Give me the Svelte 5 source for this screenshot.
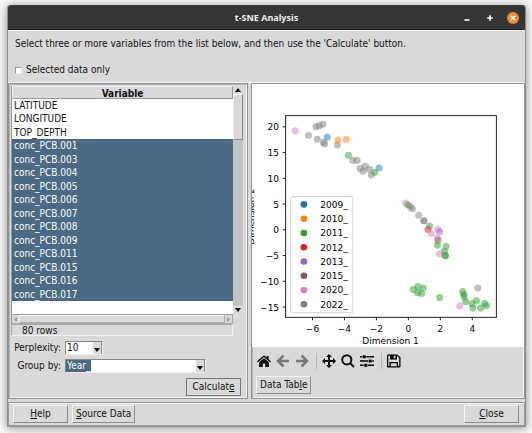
<script lang="ts">
	interface Point {
		x: number;
		y: number;
		year: string;
	}

	const years: Record<string, string> = {
		'2009_': '#1f77b4',
		'2010_': '#ff7f0e',
		'2011_': '#2ca02c',
		'2012_': '#d62728',
		'2013_': '#9467bd',
		'2015_': '#8c564b',
		'2020_': '#e377c2',
		'2022_': '#7f7f7f'
	};

	const plainVariables = ['LATITUDE', 'LONGITUDE', 'TOP_DEPTH'];
	const pcbs = ['001', '003', '004', '005', '006', '007', '008', '009', '011', '015', '016', '017'];
	const variables = [...plainVariables, ...pcbs.map((n) => `conc_PCB.${n}`)];

	let selected = $state(pcbs.map((n) => `conc_PCB.${n}`));
	let selectedOnly = $state(false);
	let perplexity = $state('10');
	let groupBy = $state('Year_');

	// canvas positions, in drawing order
	const raw: [string, number, number][] = [
		['2020_', 296, 131.7],
		['2022_', 309.3, 136],
		['2022_', 316.7, 127.7],
		['2022_', 320, 126.5],
		['2022_', 323.7, 125],
		['2022_', 318, 140],
		['2022_', 324, 143],
		['2022_', 325.3, 144.7],
		['2009_', 328, 138],
		['2022_', 338, 145.7],
		['2010_', 338.7, 140.7],
		['2010_', 347, 140],
		['2011_', 349, 156],
		['2022_', 353.3, 161],
		['2022_', 357.7, 161.3],
		['2022_', 360.7, 169.3],
		['2022_', 363.7, 172],
		['2022_', 365.7, 167],
		['2022_', 370, 170],
		['2022_', 372, 175.7],
		['2011_', 375.3, 173],
		['2009_', 379.7, 168.7],
		['2020_', 406, 203.7],
		['2011_', 408.3, 205.3],
		['2022_', 410.7, 207.3],
		['2022_', 412.7, 209.3],
		['2022_', 419, 215.7],
		['2022_', 424.3, 221.3],
		['2022_', 424.3, 221.3],
		['2011_', 430, 226.7],
		['2012_', 428.3, 230],
		['2020_', 431.7, 234],
		['2020_', 438, 229.7],
		['2013_', 440, 232.3],
		['2020_', 437.7, 238.3],
		['2015_', 438.3, 240.7],
		['2011_', 437.7, 245.7],
		['2011_', 446.3, 246.7],
		['2011_', 444.7, 251.7],
		['2020_', 440, 254.3],
		['2011_', 445.7, 256],
		['2011_', 445.7, 256.3],
		['2011_', 413.7, 289.7],
		['2011_', 418.3, 286.7],
		['2011_', 423.7, 288.3],
		['2011_', 418, 293],
		['2011_', 422, 293.7],
		['2011_', 440, 297.7],
		['2011_', 463, 291.7],
		['2011_', 464, 294.7],
		['2011_', 464.3, 297.3],
		['2011_', 466, 302],
		['2011_', 472.3, 304],
		['2011_', 473, 308.3],
		['2011_', 476.7, 301],
		['2011_', 480.7, 308.3],
		['2011_', 484.7, 303.7],
		['2011_', 486.7, 306],
		['2020_', 460, 306.3],
		['2022_', 478, 288.3]
	];
	const points: Point[] = raw.map(([year, x, y]) => ({ year, x, y }));

	const xTicks = [-6, -4, -2, 0, 2, 4];
	const yTicks = [20, 15, 10, 5, 0, -5, -10, -15];
	const px = (v: number) => 408.8 + v * 15.92;
	const py = (v: number) => 230.3 - v * 5.13;
	const label = (v: number) => String(v).replace('-', '−');

	function toggle(name: string) {
		selected = selected.includes(name)
			? selected.filter((n) => n !== name)
			: [...selected, name];
	}
</script>

<div class="window">
	<header class="titlebar">
		<h1>t-SNE Analysis</h1>
		<div class="controls">
			<button aria-label="Minimize">
				<svg width="12" height="12" viewBox="0 0 12 12"><path d="M3.5 8h5" /></svg>
			</button>
			<button aria-label="Maximize">
				<svg width="12" height="12" viewBox="0 0 12 12"><path d="M6 3.2v5.6M3.2 6h5.6" /></svg>
			</button>
			<button aria-label="Close window">
				<svg width="12" height="12" viewBox="0 0 12 12">
					<circle cx="6" cy="6" r="6" fill="#f08a2c" />
					<path d="M3.8 3.8l4.4 4.4M8.2 3.8L3.8 8.2" />
				</svg>
			</button>
		</div>
	</header>

	<section class="intro">
		<p>Select three or more variables from the list below, and then use the 'Calculate' button.</p>
		<label class="check">
			<input type="checkbox" bind:checked={selectedOnly} />
			Selected data only
		</label>
	</section>

	<main>
		<section class="panel left">
			<div class="list">
				<div class="rows">
					<table>
						<thead>
							<tr><th>Variable</th></tr>
						</thead>
						<tbody>
							{#each variables as name}
								<tr class:selected={selected.includes(name)} onclick={() => toggle(name)}>
									<td>{name}</td>
								</tr>
							{/each}
						</tbody>
					</table>
				</div>
				<div class="vbar">
					<svg class="cap" width="10" height="8" viewBox="0 0 10 8"><path d="M2 6l3-4 3 4z" /></svg>
					<div class="vthumb"></div>
					<div class="space"></div>
					<svg class="cap" width="10" height="8" viewBox="0 0 10 8"><path d="M2 2l3 4 3-4z" /></svg>
				</div>
				<div class="hbar">
					<svg width="7" height="7" viewBox="0 0 7 7"><path d="M5 1L2 3.5 5 6z" /></svg>
					<div class="hthumb"></div>
					<svg width="7" height="7" viewBox="0 0 7 7"><path d="M2 1l3 2.500L2 6z" /></svg>
				</div>
				<div class="status">80 rows</div>
			</div>

			<div class="form">
				<label for="perplexity">Perplexity:</label>
				<div class="combo short">
					<select id="perplexity" bind:value={perplexity}>
						<option>10</option>
						<option>20</option>
						<option>30</option>
					</select>
					<svg width="8" height="12" viewBox="0 0 8 12"><path d="M1 6h6L4 10z" /></svg>
				</div>
				<label for="group">Group by:</label>
				<div class="combo marked">
					<select id="group" bind:value={groupBy}>
						<option>Year_</option>
					</select>
					<svg width="8" height="12" viewBox="0 0 8 12"><path d="M1 6h6L4 10z" /></svg>
				</div>
			</div>

			<div class="actions">
				<button class="btn default">Calculat<u>e</u></button>
			</div>
		</section>

		<section class="panel right">
			<svg class="plot" viewBox="253 85 271 262" role="img" aria-label="t-SNE scatter plot">
				{#each points as p}
					<circle cx={p.x} cy={p.y} r="3" fill={years[p.year]} stroke={years[p.year]} opacity="0.5" />
				{/each}

				<rect class="axes" x="286.5" y="116.5" width="210" height="201" />
				{#each xTicks as v}
					<path class="axes" d="M{px(v)} 317.500v3" />
					<text x={px(v)} y="332" text-anchor="middle">{label(v)}</text>
				{/each}
				{#each yTicks as v}
					<path class="axes" d="M286.500 {py(v)}h-3" />
					<text x="280" y={py(v) + 3.5} text-anchor="end">{label(v)}</text>
				{/each}
				<text x="391" y="344" text-anchor="middle">Dimension 1</text>
				<text transform="translate(255 217) rotate(-90)" text-anchor="middle">Dimension 2</text>

				<rect class="legend" x="291.5" y="197" width="62" height="116" rx="2" />
				{#each Object.entries(years) as [year, color], i}
					<circle cx="304.700" cy={205 + i * 14.2} r="3.300" fill={color} />
					<text x="321" y={208.3 + i * 14.2}>{year}</text>
				{/each}
			</svg>

			<div class="toolbar">
				<button aria-label="Home">
					<svg width="14" height="14" viewBox="0 0 14 14">
						<path d="M0 7.300L7 1.300l2.600 2.200V2h2v3.200L14 7.300l-.8 1L7 3.100.8 8.300z" />
						<path d="M2 8.300L7 4.200l5 4.100V13H8.300V9.500H5.700V13H2z" />
					</svg>
				</button>
				<button class="off" aria-label="Back">
					<svg width="14" height="14" viewBox="0 0 14 14">
						<path class="stroke" d="M13 7H2.500M7.500 1.500L2 7l5.500 5.500" />
					</svg>
				</button>
				<button class="off" aria-label="Forward">
					<svg width="14" height="14" viewBox="0 0 14 14">
						<path class="stroke" d="M1 7h10.500M6.500 1.500L12 7l-5.500 5.500" />
					</svg>
				</button>
				<span class="sep"></span>
				<button aria-label="Pan">
					<svg width="14" height="14" viewBox="0 0 14 14">
						<path
							d="M7 0l3 3H8v3h3V4l3 3-3 3V8H8v3h2l-3 3-3-3h2V8H3v2L0 7l3-3v2h3V3H4z"
						/>
					</svg>
				</button>
				<button aria-label="Zoom">
					<svg width="14" height="14" viewBox="0 0 14 14">
						<circle class="stroke" cx="5.800" cy="5.800" r="4.600" />
						<path class="stroke" d="M9.200 9.200L13 13" />
					</svg>
				</button>
				<button aria-label="Configure subplots">
					<svg width="14" height="14" viewBox="0 0 14 14">
						<path d="M0 2h14v1.500H0zM0 6.300h14v1.500H0zM0 10.600h14v1.500H0z" />
						<path class="knob" d="M2.500 1h3.500v3.500H2.500zM8.500 5.300H12v3.500H8.500zM4 9.600h3.500v3.500H4z" />
					</svg>
				</button>
				<span class="sep"></span>
				<button aria-label="Save">
					<svg width="14" height="14" viewBox="0 0 14 14">
						<path
							fill-rule="evenodd"
							d="M1 .5h9.500L13.500 3.500V12.500a1 1 0 0 1-1 1H1a1 1 0 0 1-1-1V1.500a1 1 0 0 1 1-1zM1.300 1.800v10.400h1.200V8h8.500v4.200h1.200V4L10 1.800v3.700H3V1.800zM6.700 1.800v2.500h1.800V1.800zM3.800 9.300v2.900h5.900V9.300z"
						/>
					</svg>
				</button>
			</div>
			<div class="table-row">
				<button class="btn">Data Tab<u>l</u>e</button>
			</div>
		</section>
	</main>

	<footer>
		<button class="btn"><u>H</u>elp</button>
		<button class="btn source"><u>S</u>ource Data</button>
		<button class="btn close"><u>C</u>lose</button>
	</footer>
</div>

<style>
	:global(body) {
		background: #f7f7f7;
	}

	.window {
		margin: 5px 6px 6px 7px;
		background: #d9d9d9;
		border: 1px solid #8c8c8c;
		border-top: 0;
		border-radius: 3px 3px 0 0;
		box-shadow: 0 1px 8px rgba(0, 0, 0, 0.45);
		font-family: 'DejaVu Sans Condensed', 'DejaVu Sans', sans-serif;
		font-size: 10px;
		line-height: 14px;
		color: #111;
	}

	button,
	select,
	input {
		margin: 0;
		font: inherit;
		color: inherit;
	}

	svg {
		display: block;
		flex: none;
	}

	.titlebar {
		display: grid;
		grid-template-columns: 1fr auto 1fr;
		align-items: center;
		height: 25px;
		padding: 0 6px;
		background: #363636;
		border-radius: 3px 3px 0 0;
		box-shadow: inset 0 -1px #222;
		color: #f2f2f2;
	}

	h1 {
		grid-column: 2;
		margin: 0;
		font: bold 9px/14px 'Noto Sans', sans-serif;
	}

	.controls {
		display: flex;
		justify-content: flex-end;
		gap: 11px;
	}

	.controls button {
		padding: 0;
		border: 0;
		background: none;
	}

	.controls path {
		fill: none;
		stroke: #fff;
		stroke-width: 1.6;
	}

	.intro {
		padding: 6px 7px 5px;
		border-top: 1px solid #eee;
	}

	.intro p {
		margin: 0 0 12px;
	}

	.check {
		display: flex;
		align-items: center;
		gap: 4px;
	}

	.check input {
		appearance: none;
		width: 7px;
		height: 7px;
		box-sizing: border-box;
		background: #fff;
		border: 1px solid;
		border-color: #999 #eee #eee #999;
	}

	.check input:checked {
		background: #4a6984;
	}

	main {
		display: grid;
		grid-template-columns: 240px minmax(0, 1fr);
		gap: 3px;
		border-top: 1px solid #f5f5f5;
	}

	.panel {
		border: 1px solid #929292;
		box-shadow:
			inset 1px 1px #b5b5b5,
			inset -1px -1px #f5f5f5;
	}

	.left {
		padding: 2px 4px 2px 2px;
	}

	.list {
		display: grid;
		grid-template-columns: 1fr 10px;
		grid-template-rows: 228px 10px 12px;
	}

	.rows {
		background: #fff;
		border-left: 1px solid #999;
	}

	table {
		display: block;
	}

	thead,
	tr,
	th,
	td {
		display: block;
		padding: 0;
	}

	th {
		height: 13px;
		box-sizing: border-box;
		line-height: 13px;
		background: #d9d9d9;
		border: 1px solid;
		border-color: #eee #999 #999 #eee;
	}

	tbody {
		display: grid;
		grid-auto-rows: 1fr;
		height: 202px;
	}

	td {
		padding-left: 2px;
		line-height: 13px;
	}

	tr.selected {
		background: #4a6984;
		color: #fff;
	}

	.vbar {
		display: flex;
		flex-direction: column;
		background: #c3c3c3;
	}

	.cap {
		background: #d9d9d9;
	}

	.vthumb {
		height: 46px;
		box-sizing: border-box;
		background: #d9d9d9;
		border: 1px solid;
		border-color: #f2f2f2 #8a8a8a #8a8a8a #f2f2f2;
	}

	.space {
		flex: 1;
	}

	.hbar {
		grid-column: 1;
		display: flex;
		align-items: center;
		border: 1px solid;
		border-color: #999 #aaa #aaa #999;
	}

	.hbar svg {
		fill: #999;
	}

	.hthumb {
		flex: 1;
		height: 6px;
		border: 1px solid;
		border-color: #f2f2f2 #aaa #aaa #f2f2f2;
	}

	.status {
		grid-column: 1;
		padding-left: 10px;
		line-height: 12px;
		border: 1px solid;
		border-color: #aaa #f2f2f2 #f2f2f2 #aaa;
	}

	.form {
		display: grid;
		grid-template-columns: 50px 1fr;
		gap: 4px;
		margin-top: 5px;
		text-align: right;
	}

	.combo {
		display: flex;
		width: 141px;
		height: 14px;
		box-sizing: border-box;
		background: #fff;
		border: 1px solid;
		border-color: #888 #eee #eee #888;
	}

	.combo.short {
		width: 38px;
	}

	.combo select {
		appearance: none;
		flex: 1;
		min-width: 0;
		padding: 0 1px;
		border: 0;
		border-radius: 0;
		background: none;
		line-height: 12px;
	}

	.combo svg {
		background: #d9d9d9;
		border-right: 1px solid #888;
	}

	.combo.marked select {
		background: linear-gradient(#4a6984, #4a6984) no-repeat 0 0 / 25px 100%;
		color: #fff;
	}

	.actions {
		display: flex;
		justify-content: flex-end;
		padding: 5px 2px 0;
	}

	.btn {
		height: 18px;
		min-width: 55px;
		box-sizing: border-box;
		padding: 0 3px;
		background: #d9d9d9;
		border: 1px solid;
		border-color: #f7f7f7 #8a8a8a #8a8a8a #f7f7f7;
		line-height: 14px;
		white-space: nowrap;
	}

	.btn.default {
		border-color: #777;
	}

	u {
		text-underline-offset: 1px;
	}

	.plot {
		width: 100%;
		background: #fff;
		font: 9px 'DejaVu Sans', sans-serif;
	}

	.axes {
		fill: none;
		stroke: #222;
		stroke-width: 1;
	}

	.legend {
		fill: #fff;
		stroke: #d4d4d4;
	}

	.toolbar {
		display: flex;
		align-items: center;
		gap: 5px;
		height: 28px;
		padding-left: 5px;
	}

	.toolbar button {
		padding: 0;
		border: 0;
		background: none;
	}

	.toolbar .stroke {
		fill: none;
		stroke: #111;
		stroke-width: 2;
	}

	.toolbar .off .stroke {
		stroke: #777;
		stroke-width: 2.5;
	}

	.knob {
		stroke: #d9d9d9;
		stroke-width: 0.6;
	}

	.sep {
		width: 1px;
		height: 16px;
		margin-left: 2px;
		background: #b5b5b5;
	}

	.table-row {
		padding: 1px 4px 3px;
	}

	footer {
		display: flex;
		gap: 4px;
		margin-top: 3px;
		padding: 2px 5px 2px 4px;
		border: 1px solid #999;
		box-shadow: inset 0 1px #f5f5f5;
	}

	.source {
		min-width: 60px;
	}

	.close {
		margin-left: auto;
	}
</style>
